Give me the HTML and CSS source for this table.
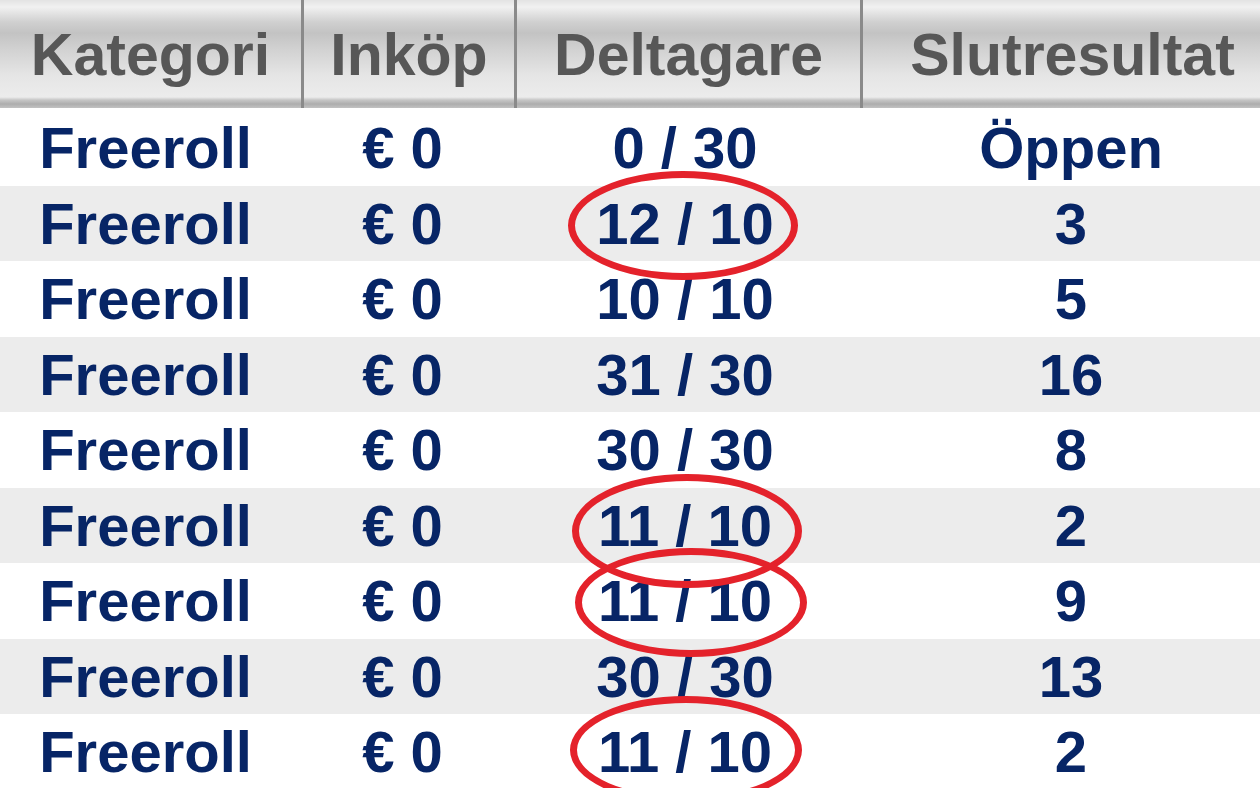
FILE: index.html
```html
<!DOCTYPE html>
<html lang="sv">
<head>
    <meta charset="UTF-8">
    <meta name="viewport" content="width=device-width, initial-scale=1.0">
    <title>Turneringar</title>
    <link rel="stylesheet" href="styles.css">
</head>
<body>
    <div class="results">
        <div class="row head">
            <div class="cell">Kategori</div>
            <div class="cell">Inköp</div>
            <div class="cell">Deltagare</div>
            <div class="cell last">Slutresultat</div>
        </div>

        <div class="body">
            <div class="row">
                <div class="cell name">Freeroll</div>
                <div class="cell buyin">€ 0</div>
                <div class="cell players">0 / 30</div>
                <div class="cell last">Öppen</div>
            </div>
            <div class="row alt">
                <div class="cell name">Freeroll</div>
                <div class="cell buyin">€ 0</div>
                <div class="cell players">12 / 10<span class="mark mark-1"></span></div>
                <div class="cell last">3</div>
            </div>
            <div class="row">
                <div class="cell name">Freeroll</div>
                <div class="cell buyin">€ 0</div>
                <div class="cell players">10 / 10</div>
                <div class="cell last">5</div>
            </div>
            <div class="row alt">
                <div class="cell name">Freeroll</div>
                <div class="cell buyin">€ 0</div>
                <div class="cell players">31 / 30</div>
                <div class="cell last">16</div>
            </div>
            <div class="row">
                <div class="cell name">Freeroll</div>
                <div class="cell buyin">€ 0</div>
                <div class="cell players">30 / 30</div>
                <div class="cell last">8</div>
            </div>
            <div class="row alt">
                <div class="cell name">Freeroll</div>
                <div class="cell buyin">€ 0</div>
                <div class="cell players">11 / 10<span class="mark mark-2"></span></div>
                <div class="cell last">2</div>
            </div>
            <div class="row">
                <div class="cell name">Freeroll</div>
                <div class="cell buyin">€ 0</div>
                <div class="cell players">11 / 10<span class="mark mark-3"></span></div>
                <div class="cell last">9</div>
            </div>
            <div class="row alt">
                <div class="cell name">Freeroll</div>
                <div class="cell buyin">€ 0</div>
                <div class="cell players">30 / 30</div>
                <div class="cell last">13</div>
            </div>
            <div class="row">
                <div class="cell name">Freeroll</div>
                <div class="cell buyin">€ 0</div>
                <div class="cell players">11 / 10<span class="mark mark-4"></span></div>
                <div class="cell last">2</div>
            </div>
        </div>
    </div>
</body>
</html>
```

FILE: styles.css
```css
body {
    margin: 0;
    overflow: hidden;
    background-color: #ffffff;
    font-family: "Liberation Sans", Arial, sans-serif;
    font-weight: bold;
}
.results {
    width: 1260px;
}
.row {
    display: grid;
    grid-template-columns: 301px 213px 346px 1fr;
    height: 75.5px;
}
.row.alt {
    background-color: #ececec;
}
.cell {
    display: flex;
    align-items: center;
    justify-content: center;
    font-size: 58px;
    color: #072566;
    position: relative;
}
.head {
    height: 108px;
    background: linear-gradient(to bottom,
        #e3e3e3 0px,
        #f1f1f1 7px,
        #d0d0d0 22px,
        #c3c3c3 33px,
        #d2d2d2 50px,
        #e5e5e5 75px,
        #ececec 97px,
        #c6c6c6 100px,
        #adadad 104px,
        #c2c2c2 108px);
}
.head .cell {
    font-size: 59px;
    color: #575757;
    padding-top: 2px;
}
.head .cell + .cell {
    border-left: 3px solid #8a8a8a;
}
.body {
    padding-top: 2px;
}
.name,
.buyin {
    padding-right: 10px;
}
.players {
    padding-right: 4px;
}
.last {
    padding-left: 22px;
}

/* red circles drawn over the over-full tournaments */
.mark {
    position: absolute;
    z-index: 1;
    border: 7px solid #e4222b;
    border-radius: 50%;
    box-sizing: border-box;
    width: 230px;
    height: 109px;
}
.mark-1 {
    left: 54px;
    top: -15px;
}
.mark-2 {
    left: 58px;
    top: -14px;
    height: 114px;
}
.mark-3 {
    left: 61px;
    top: -15px;
    width: 232px;
}
.mark-4 {
    left: 56px;
    top: -18px;
    width: 232px;
    height: 108px;
}
```
